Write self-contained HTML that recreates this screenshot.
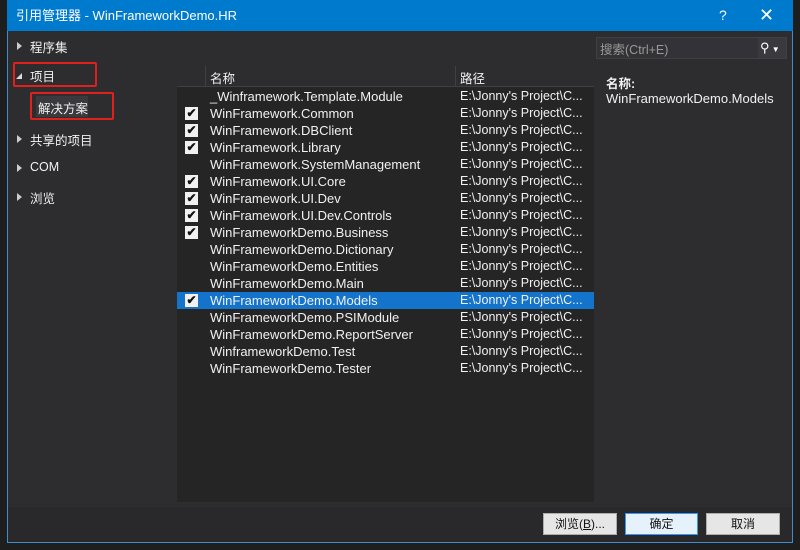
<!DOCTYPE html>
<html><head><meta charset="utf-8"><style>
*{margin:0;padding:0;box-sizing:border-box}
body{width:800px;height:550px;background:#1e1e1e;position:relative;overflow:hidden;font-family:"Liberation Sans","Noto Sans CJK SC",sans-serif;font-size:12px;color:#f1f1f1}
.a{position:absolute}
#win{left:7px;top:0;width:786px;height:543px;background:#2d2d30;border:1px solid #3f8ccf;border-top:none}
#title{left:7px;top:0;width:786px;height:31px;background:#007acc;color:#fff;font-size:13px;line-height:31px;padding-left:9px}
.tri{position:absolute;width:0;height:0;border-top:4px solid transparent;border-bottom:4px solid transparent;border-left:5px solid #ccc}
.tri.o{border:none;width:0;height:0;border-left:6px solid transparent;border-bottom:6px solid #ddd}
.nav{position:absolute;left:30px;font-size:12.5px;color:#f1f1f1}
#list{left:177px;top:66px;width:417px;height:436px;background:#252526}
.row{position:absolute;left:177px;width:417px;height:17px;line-height:17px;font-size:12.5px}
.row .n{position:absolute;left:33px;font-size:13px}
.row .p{position:absolute;left:283px}
.cb{position:absolute;left:8px;top:2px;width:13px;height:13px;background:#f1f1f1;color:#111;font-size:12px;line-height:13px;text-align:center;font-weight:bold}
.btn{position:absolute;top:513px;height:22px;background:#e6e6e6;border:1px solid #adadad;color:#111;text-align:center;line-height:20px;font-size:12px}
</style></head><body>
<div class="a" id="win"></div>
<div class="a" style="left:8px;top:507px;width:784px;height:35px;background:#29292c"></div>
<div class="a" id="title">引用管理器 - WinFrameworkDemo.HR<span style="position:absolute;left:712px;font-size:14px">?</span><span style="position:absolute;left:752px;font-size:18px">✕</span></div>

<div class="tri" style="left:17px;top:42px"></div><div class="nav" style="top:37px">程序集</div>
<div class="tri o" style="left:16px;top:73px"></div><div class="nav" style="top:66px">项目</div>
<div class="a" style="left:13px;top:62px;width:84px;height:25px;border:2px solid #e0201c;border-radius:2px"></div>
<div class="a" style="left:36px;top:96px;width:52px;height:21px;background:#3a3a3e"></div>
<div class="nav" style="left:38px;top:98px">解决方案</div>
<div class="a" style="left:30px;top:92px;width:84px;height:28px;border:2px solid #e0201c;border-radius:2px"></div>
<div class="tri" style="left:17px;top:135px"></div><div class="nav" style="top:130px">共享的项目</div>
<div class="tri" style="left:17px;top:164px"></div><div class="nav" style="top:160px">COM</div>
<div class="tri" style="left:17px;top:193px"></div><div class="nav" style="top:188px">浏览</div>

<div class="a" id="list"></div>
<div class="a" style="left:177px;top:66px;width:417px;height:21px;background:#2d2d30;border-bottom:1px solid #3f3f46"></div>
<div class="a" style="left:205px;top:66px;width:1px;height:21px;background:#3f3f46"></div>
<div class="a" style="left:455px;top:66px;width:1px;height:21px;background:#3f3f46"></div>
<div class="a" style="left:210px;top:68px;font-size:12.5px">名称</div>
<div class="a" style="left:460px;top:68px;font-size:12.5px">路径</div>

<div class="row" style="top:88px"><span class="n">_Winframework.Template.Module</span><span class="p">E:\Jonny's Project\C...</span></div>
<div class="row" style="top:105px"><span class="cb">✔</span><span class="n">WinFramework.Common</span><span class="p">E:\Jonny's Project\C...</span></div>
<div class="row" style="top:122px"><span class="cb">✔</span><span class="n">WinFramework.DBClient</span><span class="p">E:\Jonny's Project\C...</span></div>
<div class="row" style="top:139px"><span class="cb">✔</span><span class="n">WinFramework.Library</span><span class="p">E:\Jonny's Project\C...</span></div>
<div class="row" style="top:156px"><span class="n">WinFramework.SystemManagement</span><span class="p">E:\Jonny's Project\C...</span></div>
<div class="row" style="top:173px"><span class="cb">✔</span><span class="n">WinFramework.UI.Core</span><span class="p">E:\Jonny's Project\C...</span></div>
<div class="row" style="top:190px"><span class="cb">✔</span><span class="n">WinFramework.UI.Dev</span><span class="p">E:\Jonny's Project\C...</span></div>
<div class="row" style="top:207px"><span class="cb">✔</span><span class="n">WinFramework.UI.Dev.Controls</span><span class="p">E:\Jonny's Project\C...</span></div>
<div class="row" style="top:224px"><span class="cb">✔</span><span class="n">WinFrameworkDemo.Business</span><span class="p">E:\Jonny's Project\C...</span></div>
<div class="row" style="top:241px"><span class="n">WinFrameworkDemo.Dictionary</span><span class="p">E:\Jonny's Project\C...</span></div>
<div class="row" style="top:258px"><span class="n">WinFrameworkDemo.Entities</span><span class="p">E:\Jonny's Project\C...</span></div>
<div class="row" style="top:275px"><span class="n">WinFrameworkDemo.Main</span><span class="p">E:\Jonny's Project\C...</span></div>
<div class="row" style="top:292px;background:#1474cc"><span class="cb">✔</span><span class="n">WinFrameworkDemo.Models</span><span class="p">E:\Jonny's Project\C...</span></div>
<div class="row" style="top:309px"><span class="n">WinFrameworkDemo.PSIModule</span><span class="p">E:\Jonny's Project\C...</span></div>
<div class="row" style="top:326px"><span class="n">WinFrameworkDemo.ReportServer</span><span class="p">E:\Jonny's Project\C...</span></div>
<div class="row" style="top:343px"><span class="n">WinframeworkDemo.Test</span><span class="p">E:\Jonny's Project\C...</span></div>
<div class="row" style="top:360px"><span class="n">WinFrameworkDemo.Tester</span><span class="p">E:\Jonny's Project\C...</span></div>

<div class="a" style="left:596px;top:37px;width:191px;height:22px;background:#333337;border:1px solid #3f3f46"></div>
<div class="a" style="left:600px;top:39px;color:#999;font-size:12.5px">搜索(Ctrl+E)</div>
<div class="a" style="left:758px;top:38px;width:28px;height:20px;background:#3a3a3e;color:#fff;font-size:13px;line-height:20px;padding-left:2px">&#x26B2;<span style="font-size:8px"> ▼</span></div>
<div class="a" style="left:606px;top:73px;font-weight:bold;font-size:12.5px">名称:</div>
<div class="a" style="left:606px;top:91px;font-size:13px">WinFrameworkDemo.Models</div>

<div class="btn" style="left:543px;width:74px">浏览(<u>B</u>)...</div>
<div class="btn" style="left:625px;width:73px;border:1px solid #3399ff;background:#e5f1fb">确定</div>
<div class="btn" style="left:706px;width:74px">取消</div>
</body></html>
